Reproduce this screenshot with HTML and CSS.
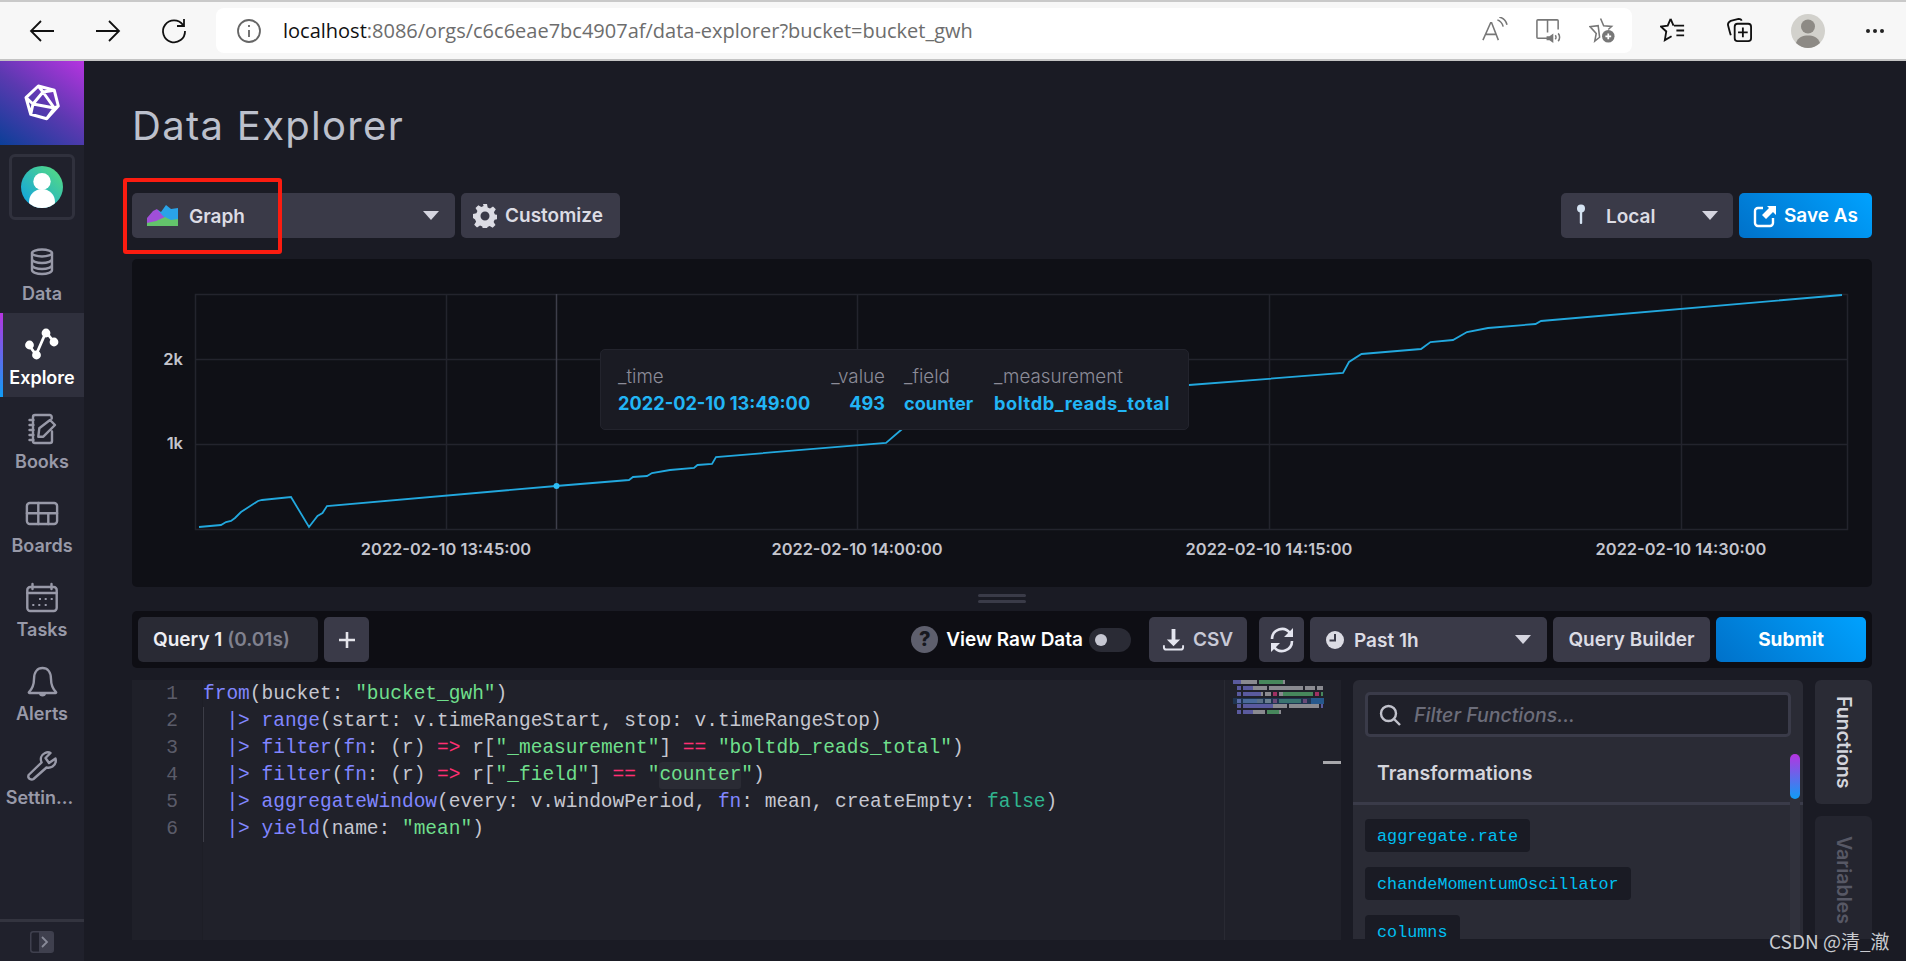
FILE: index.html
```html
<!DOCTYPE html>
<html lang="en">
<head>
<meta charset="utf-8">
<title>Data Explorer</title>
<link rel="stylesheet" href="styles.css">
</head>
<body>
<header class="browser">
  <svg class="bi bi-nav" viewBox="0 0 28 28"><path d="M26 14H3M13 4L3 14l10 10"/></svg>
  <svg class="bi bi-nav" viewBox="0 0 28 28"><path d="M2 14h23M15 4l10 10-10 10"/></svg>
  <svg class="bi bi-nav" viewBox="0 0 28 28"><path d="M23 8a11 11 0 1 0 2 6M24 2v7h-7"/></svg>
  <div class="urlbox">
    <svg class="bi bi-info" viewBox="0 0 26 26"><circle cx="13" cy="13" r="11"/><path d="M13 12v7M13 7v2"/></svg>
    <span class="url"><b>localhost</b>:8086/orgs/c6c6eae7bc4907af/data-explorer?bucket=bucket_gwh</span>
    <svg class="bi bi-tool grey" viewBox="0 0 28 28"><path d="M2 24L10 6h1l7 18M5 18h11M17 3c3 1 5 3 6 7M19 0c4 1 7 4 8 8" /></svg>
    <svg class="bi bi-tool grey" viewBox="0 0 28 28"><path d="M13 22H3a1 1 0 0 1-1-1V4a1 1 0 0 1 1-1h20a1 1 0 0 1 1 1v9M13 3v13"/><path class="fillg" d="M12 20h3l4-3v10l-4-3h-3z"/><path d="M21 19c1 1 1 3 0 4M24 17c2 2 2 6 0 8"/></svg>
    <svg class="bi bi-tool grey" viewBox="0 0 28 28"><path d="M12 1.500l3.200 7.500 8.300.8-3.500 3.200M11 21l-5 4 1.500-8L1 10l8.500-1z"/><circle class="fillg" cx="20" cy="20" r="6.500"/><path class="wht" d="M20 17v6M17 20h6"/></svg>
  </div>
  <svg class="bi bi-tool2" viewBox="0 0 28 28"><path d="M11 2l3 7M11 2L8 9l-7 1 5.500 5L5 24l7-4M14.500 9H25M17 14h8M17 19h8"/></svg>
  <svg class="bi bi-tool2 second" viewBox="0 0 28 28"><path d="M5 19c-1-3-2-7-3-11 0-2 1-3 3-4l8-2c2 0 3 1 3 2"/><rect x="9" y="7" width="17" height="18" rx="3"/><path d="M17.500 11v10M12.500 16h10"/></svg>
  <div class="profile"><svg viewBox="0 0 34 34"><circle cx="17" cy="17" r="17" fill="#d2d1cc"/><circle cx="17" cy="12.500" r="7" fill="#8d8a85"/><path d="M5 29c2-6 7-7.500 12-7.500S27 23 29 29c-3 3-8 5-12 5S8 32 5 29z" fill="#8d8a85"/></svg></div>
  <div class="more"><i></i><i></i><i></i></div>
</header>

<div class="app">
  <nav class="sidebar">
    <div class="logo">
      <svg viewBox="0 0 84 84" class="logo-svg"><path d="M38.300 25L54.300 29.300 58.300 45 46.700 57.700 30.700 53.300 26 36.700zM43 31L54.300 47 33 43zM38.300 25L43 31M54.300 29.300L43 31M26 36.700L33 43M33 43L30.700 53.300M54.300 47L46.700 57.700M54.300 47L58.300 45"/></svg>
    </div>
    <div class="avatar-box">
      <svg viewBox="0 0 42 42" class="avatar"><defs><linearGradient id="ag" x1="0" y1="1" x2="1" y2="0"><stop offset="0" stop-color="#0b9ee8"/><stop offset="1" stop-color="#5adf7c"/></linearGradient><clipPath id="ac"><circle cx="21" cy="21" r="21"/></clipPath></defs><circle cx="21" cy="21" r="21" fill="url(#ag)"/><g clip-path="url(#ac)" fill="#fff"><ellipse cx="21" cy="15.500" rx="8.700" ry="8.500"/><ellipse cx="21" cy="36" rx="13" ry="13"/></g></svg>
    </div>
    <a class="nav-item">
      <svg class="nav-icon" viewBox="0 0 32 30"><ellipse cx="16" cy="7" rx="10" ry="3.500"/><path d="M6 7v17c0 2.200 4.500 4 10 4s10-1.800 10-4V7M6 13c0 2.200 4.500 4 10 4s10-1.800 10-4M6 19c0 2.200 4.500 4 10 4s10-1.800 10-4"/></svg>
      <span>Data</span>
    </a>
    <a class="nav-item active">
      <svg class="nav-icon" viewBox="0 0 32 30"><path d="M3 15l7 10L20 2l8 10"/><g class="dots"><circle cx="3.500" cy="15" r="3"/><circle cx="10.500" cy="25" r="3"/><circle cx="20" cy="3" r="3"/><circle cx="28" cy="12" r="3"/></g></svg>
      <span>Explore</span>
    </a>
    <a class="nav-item">
      <svg class="nav-icon" viewBox="0 0 32 30"><path d="M25.700 4.500V3a2 2 0 0 0-2-2H9a2 2 0 0 0-2 2v24a2 2 0 0 0 2 2h15a2 2 0 0 0 2-2V17.500M3.500 6h4M3.500 11h4M3.500 16h4M3.500 21h4M3.500 26h4M12.300 22.700l1-8.400L24 6l5 5-11.700 11.700z"/></svg>
      <span>Books</span>
    </a>
    <a class="nav-item">
      <svg class="nav-icon" viewBox="0 0 32 30"><rect x=".9" y="5" width="30.200" height="21" rx="3"/><path d="M.9 15.300h30.200M12.300 5v21M22.300 15.300V26"/></svg>
      <span>Boards</span>
    </a>
    <a class="nav-item">
      <svg class="nav-icon" viewBox="0 0 32 30"><rect x="1.300" y="5" width="29.400" height="24" rx="3"/><path d="M1.300 11h29.400M6.500 2v5M25.500 2v5"/><path class="dash" d="M13 17h2M18.700 17h2M24.700 17h2M6.300 23h2M12.300 23h2M18.700 23h2"/></svg>
      <span>Tasks</span>
    </a>
    <a class="nav-item">
      <svg class="nav-icon" viewBox="0 0 32 30"><path d="M3 26c3.500-3.500 5-7 5-13C8 6 11.500 2 16.500 2S25 6 25 13c0 6 1.500 9.500 5 13 .5.500 0 1-.5 1H3.500c-.5 0-1-.5-.5-1z"/><path class="solid" d="M13 27.500h7c0 2-1.500 3-3.500 3s-3.500-1-3.500-3z"/></svg>
      <span>Alerts</span>
    </a>
    <a class="nav-item">
      <svg class="nav-icon" viewBox="0 0 32 30"><path d="M2.600 25l13-12.500C14 9 15 5 19 3c2-1 4-1 5.500 0L19.500 8l3.500 5 6.500-4.500c.8 3-.2 6-3 8-2 1.300-4 1.600-6 1L7.500 29c-1.500 1-4 .5-5-1.300-.5-1 0-2 .1-2.700z"/></svg>
      <span class="clip">Settin...</span>
    </a>
    <div class="side-foot">
      <svg viewBox="0 0 24 22" class="foot-icon"><rect x=".75" y=".75" width="22.500" height="20.500" rx="2.500" class="foot-box"/><path d="M9 1h12a2 2 0 0 1 2 2v16a2 2 0 0 1-2 2H9z" class="foot-fill"/><path d="M12 6l5 5-5 5" class="foot-chev"/></svg>
    </div>
  </nav>

  <main class="main">
    <div class="page-head"><h1>Data Explorer</h1></div>

    <div class="toolbar">
      <div class="red-mark"></div>
      <button class="btn graph-select">
        <svg class="graph-icon" viewBox="0 0 31 21"><path d="M0 14L11 5l3 2 5-7 5 4 7-1v15H0z" fill="#2aa3e8"/><path d="M0 21v-8L6 6l4-2 6 7 6 4 9 0v6z" fill="#a04fd8"/><path d="M0 21v-3l9-2 9-4 6 3 7-1v7z" fill="#63c46b"/></svg>
        <span class="grow">Graph</span>
        <i class="caret"></i>
      </button>
      <button class="btn customize">
        <svg class="gear" viewBox="0 0 24 24"><path d="M10 0h4l.7 3.400 2.300 1 3-1.900 2.800 2.800-1.900 3 1 2.300 3.100.400v4l-3.400.7-1 2.300 1.900 3-2.800 2.800-3-1.900-2.300 1-.4 3.100h-4l-.7-3.400-2.300-1-3 1.900-2.800-2.800 1.900-3-1-2.300L0 14v-4l3.400-.7 1-2.300-1.900-3L5.300 1.200l3 1.900 2.300-1zM12 7.500a4.500 4.500 0 1 0 0 9 4.500 4.500 0 0 0 0-9z" fill-rule="evenodd"/></svg>
        <span>Customize</span>
      </button>
      <div class="spacer"></div>
      <button class="btn local">
        <svg class="pin" viewBox="0 0 10 20"><circle cx="5" cy="4.500" r="4"/><rect x="3.800" y="7" width="2.400" height="13" rx="1"/></svg>
        <span class="grow">Local</span>
        <i class="caret"></i>
      </button>
      <button class="btn primary save">
        <svg class="save-icon" viewBox="0 0 24 24"><path d="M10 4H5a3 3 0 0 0-3 3v12a3 3 0 0 0 3 3h12a3 3 0 0 0 3-3v-5"/><path class="solid" d="M14 2h9v9l-3-3-7 7-4-4 7-7z"/></svg>
        <span>Save As</span>
      </button>
    </div>

    <section class="chart">
      <svg class="plot" viewBox="0 0 1740 328">
        <g class="grid">
          <path d="M63.500 35.500h1652v235H63.500z"/>
          <path d="M63 100.500h1652M63 185.500h1652M314.500 35v235M725.500 35v235M1137.500 35v235M1549.500 35v235"/>
        </g>
        <path class="cross" d="M424.500 35v235"/>
        <polyline class="series" points="67,268 89,266 94,263 99,262 103,259 109,253 126,242 130,241 159,238 177,268 185.500,257 190.500,254 195,247 424,227 497,221 501,218 515,217 520,214 538,211 562,209 565.500,206 580,205 584,198 754,184 769,171 800,145 1057,126 1211,114 1217,103 1229.500,95 1289,90 1298.500,83 1321,81 1335,73 1356,69 1403.500,65 1409,62 1710,36"/>
        <circle class="dot" cx="424.500" cy="227" r="3"/>
        <g class="ylab"><text x="51" y="106">2k</text><text x="51" y="190">1k</text></g>
        <g class="xlab"><text x="314" y="296">2022-02-10 13:45:00</text><text x="725" y="296">2022-02-10 14:00:00</text><text x="1137" y="296">2022-02-10 14:15:00</text><text x="1549" y="296">2022-02-10 14:30:00</text></g>
      </svg>
      <div class="tip">
        <span>_time</span><span class="r">_value</span><span>_field</span><span>_measurement</span>
        <b>2022-02-10 13:49:00</b><b class="r">493</b><b>counter</b><b>boltdb_reads_total</b>
      </div>
    </section>

    <div class="handle"><i></i><i></i></div>

    <div class="querybar">
      <div class="qtab">Query 1 <em>(0.01s)</em></div>
      <button class="btn plus"><svg viewBox="0 0 16 16"><path d="M8 0v16M0 8h16"/></svg></button>
      <div class="spacer"></div>
      <div class="help">?</div>
      <span class="raw">View Raw Data</span>
      <div class="toggle"><i></i></div>
      <button class="btn csv">
        <svg class="csv-icon" viewBox="0 0 24 24"><path class="solid" d="M10 1h4v11h5l-7 7-7-7h5z"/><path d="M2 18v2a2.500 2.500 0 0 0 2.500 2.500h15A2.500 2.500 0 0 0 22 20v-2"/></svg>
        <span>CSV</span>
      </button>
      <button class="btn refresh">
        <svg viewBox="0 0 26 26"><path d="M3 12a10 10 0 0 1 18-6M23 14a10 10 0 0 1-18 6"/><path class="solid" d="M24 1v9h-9zM2 25v-9h9z"/></svg>
      </button>
      <button class="btn past">
        <svg class="clock" viewBox="0 0 18 18"><circle cx="9" cy="9" r="9"/><path d="M9 3v6.500H3.500"/></svg>
        <span class="grow">Past 1h</span>
        <i class="caret"></i>
      </button>
      <button class="btn builder">Query Builder</button>
      <button class="btn primary submit">Submit</button>
    </div>

    <div class="workspace">
      <div class="editor">
        <div class="gutter"><div>1</div><div>2</div><div>3</div><div>4</div><div>5</div><div>6</div></div>
        <div class="code">
          <i class="guide"></i>
          <div class="ln"><span class="f">from</span>(bucket: <span class="s">"bucket_gwh"</span>)</div>
          <div class="ln">  <span class="f">|&gt;</span> <span class="f">range</span>(start: v.timeRangeStart, stop: v.timeRangeStop)</div>
          <div class="ln">  <span class="f">|&gt;</span> <span class="f">filter</span>(<span class="f">fn</span>: (r) <span class="o">=&gt;</span> r[<span class="s">"_measurement"</span>] <span class="o">==</span> <span class="s">"boltdb_reads_total"</span>)</div>
          <div class="ln">  <span class="f">|&gt;</span> <span class="f">filter</span>(<span class="f">fn</span>: (r) <span class="o">=&gt;</span> r[<span class="s">"_field"</span>] <span class="o">==</span> <span class="s">"<span class="hl">counter</span>"</span>)</div>
          <div class="ln">  <span class="f">|&gt;</span> <span class="f">aggregateWindow</span>(every: v.windowPeriod, <span class="f">fn</span>: mean, createEmpty: <span class="b">false</span>)</div>
          <div class="ln">  <span class="f">|&gt;</span> <span class="f">yield</span>(name: <span class="s">"mean"</span>)</div>
        </div>
        <div class="minimap">
          <svg class="mini" viewBox="0 0 117 40">
            <g class="mp"><rect x="8" y="0" width="8" height="4"/><rect x="12" y="6" width="4" height="4"/><rect x="18" y="6" width="10" height="4"/><rect x="12" y="12" width="4" height="4"/><rect x="18" y="12" width="18" height="4"/><rect x="12" y="24" width="4" height="4"/><rect x="18" y="24" width="30" height="4"/><rect x="96" y="24" width="2" height="4"/><rect x="12" y="30" width="4" height="4"/><rect x="18" y="30" width="10" height="4"/></g>
            <g class="mg"><rect x="16" y="0" width="16" height="4"/><rect x="58" y="0" width="2" height="4"/><rect x="28" y="6" width="14" height="4"/><rect x="44" y="6" width="34" height="4"/><rect x="80" y="6" width="10" height="4"/><rect x="92" y="6" width="6" height="4"/><rect x="36" y="12" width="2" height="4"/><rect x="40" y="12" width="6" height="4"/><rect x="54" y="12" width="4" height="4"/><rect x="48" y="24" width="14" height="4"/><rect x="64" y="24" width="30" height="4"/><rect x="28" y="30" width="12" height="4"/><rect x="54" y="30" width="2" height="4"/></g>
            <g class="ms"><rect x="34" y="0" width="24" height="4"/><rect x="58" y="12" width="30" height="4"/><rect x="96" y="12" width="2" height="4"/><rect x="42" y="30" width="12" height="4"/></g>
            <g class="mk"><rect x="48" y="12" width="4" height="4"/><rect x="90" y="12" width="4" height="4"/></g>
            <rect class="mh" x="8" y="18" width="91" height="6"/>
            <g class="mr"><rect x="12" y="19" width="4" height="4" fill="#5a6aa8"/><rect x="18" y="19" width="14" height="4" fill="#4a6a9a"/><rect x="32" y="19" width="6" height="4" fill="#5a7088"/><rect x="40" y="19" width="6" height="4" fill="#6a7f8f"/><rect x="48" y="19" width="4" height="4" fill="#6a4a78"/><rect x="54" y="19" width="22" height="4" fill="#3a7470"/><rect x="78" y="19" width="4" height="4" fill="#6a4a78"/><rect x="86" y="18" width="13" height="6" fill="#26588c"/></g>
          </svg>
          <i class="ruler"></i>
        </div>
      </div>

      <aside class="functions">
        <div class="filter">
          <svg class="search" viewBox="0 0 22 22"><circle cx="9.500" cy="9.500" r="7.500"/><path d="M15 15l6 6"/></svg>
          <span>Filter Functions...</span>
        </div>
        <h3>Transformations</h3>
        <div class="tags">
          <div class="tag">aggregate.rate</div>
          <div class="tag">chandeMomentumOscillator</div>
          <div class="tag">columns</div>
        </div>
        <i class="scroll-track"></i>
        <i class="scroll-thumb"></i>
      </aside>

      <div class="sidetabs">
        <div class="stab on">Functions</div>
        <div class="stab">Variables</div>
      </div>
    </div>
  </main>
</div>
<div class="watermark">CSDN @清_澈</div>
</body>
</html>
```

FILE: styles.css
```css
* { box-sizing: border-box; }
html, body { margin: 0; height: 100%; }
body {
  width: 1906px;
  height: 961px;
  overflow: hidden;
  background: #1a1b24;
  font-family: Inter, "Noto Sans", sans-serif;
  position: relative;
}
button { font: inherit; border: 0; }

/* browser chrome */
.browser {
  height: 61px;
  background: #f7f7f7;
  border-top: 2px solid #c9c9c9;
  border-bottom: 2px solid #c4c4c4;
  display: flex;
  align-items: center;
  padding-left: 28px;
}
.bi { fill: none; stroke: #111; stroke-width: 1.8; flex: none; }
.bi-nav { width: 28px; height: 28px; margin-right: 38px; }
.bi-nav:nth-child(3) { margin-right: 0; }
.urlbox {
  margin-left: 28px;
  width: 1416px;
  height: 45px;
  background: #fff;
  border-radius: 8px;
  display: flex;
  align-items: center;
  position: relative;
}
.bi-info { position: absolute; left: 20px; width: 26px; height: 26px; stroke: #666; }
.url {
  margin-left: 67px;
  font: 400 20px "Open Sans", sans-serif;
  color: #6d6d6d;
  flex: 1;
  white-space: nowrap;
}
.url b { font-weight: 400; color: #111; }
.bi-tool { width: 27px; height: 27px; margin-right: 27px; }
.bi-tool:last-child { margin-right: 16px; }
.grey { stroke: #777; stroke-width: 1.600; }
.fillg { fill: #777; stroke: none; }
.wht { stroke: #fff; stroke-width: 1.800; }
.bi-tool2 { width: 27px; height: 27px; margin-left: 28px; stroke-width: 1.900; }
.bi-tool2.second { margin-left: 39px; }
.profile { width: 34px; height: 34px; margin-left: 38px; }
.profile svg { display: block; }
.more { margin-left: 41px; display: flex; gap: 3px; }
.more i { width: 4px; height: 4px; border-radius: 50%; background: #222; }

/* layout */
.app { display: flex; height: 900px; }
.sidebar {
  width: 84px;
  flex: none;
  background: #20212c;
  display: flex;
  flex-direction: column;
  position: relative;
}
.logo {
  height: 84px;
  background: linear-gradient(35deg, #0b3f98 0%, #5b39b0 50%, #b634e0 100%);
}
.logo-svg { display: block; width: 84px; height: 84px; fill: none; stroke: #fff; stroke-width: 3; stroke-linejoin: round; }
.avatar-box {
  margin: 9px 0 9px 9px;
  width: 66px;
  height: 66px;
  border: 3px solid #30313d;
  border-radius: 6px;
  display: flex;
  align-items: center;
  justify-content: center;
}
.avatar { width: 42px; height: 42px; }
.nav-item {
  height: 84px;
  display: flex;
  flex-direction: column;
  align-items: center;
  padding-top: 17px;
  color: #9899a8;
  font-size: 18px;
  font-weight: 600;
  line-height: 22px;
  position: relative;
}
.nav-item span { margin-top: 7px; }
.nav-item .clip { margin-right: 5px; }
.nav-icon { width: 32px; height: 30px; flex: none; overflow: visible; fill: none; stroke: #9899a8; stroke-width: 2.400; stroke-linejoin: round; stroke-linecap: round; }
.nav-icon .solid { fill: #9899a8; stroke: none; }
.nav-icon .dash { stroke-linecap: butt; stroke-width: 2; }
.nav-item.active { background: #2f303d; color: #fff; }
.nav-item.active .nav-icon { stroke: #fff; stroke-width: 2.800; }
.dots { fill: #fff; }
.nav-item.active::before {
  content: "";
  position: absolute;
  inset: 0 auto 0 0;
  width: 3px;
  background: linear-gradient(#b634e0, #0f9cf5);
}
.side-foot {
  margin-top: auto;
  height: 42px;
  border-top: 3px solid #33343f;
  display: flex;
  justify-content: center;
  align-items: center;
}
.foot-icon { width: 24px; height: 22px; }
.foot-box { fill: none; stroke: #3f404e; stroke-width: 1.500; }
.foot-fill { fill: #3f404e; }
.foot-chev { fill: none; stroke: #888a98; stroke-width: 1.800; }

.main { flex: 1; min-width: 0; padding: 0 34px 0 48px; display: flex; flex-direction: column; }
.page-head { height: 132px; padding-top: 41px; }
h1 { margin: 0; font-size: 40px; line-height: 48px; font-weight: 400; letter-spacing: 1.300px; color: #bcc0cc; }

/* buttons */
.toolbar { display: flex; gap: 6px; height: 45px; position: relative; margin-bottom: 21px; }
.spacer { flex: 1; }
.grow { flex: 1; text-align: left; padding-top: 2px; }
.btn {
  height: 45px;
  background: #3a3a48;
  color: #dcdce4;
  border-radius: 5px;
  display: flex;
  align-items: center;
  font-size: 19px;
  font-weight: 600;
  padding: 0;
}
.caret { width: 0; height: 0; border: 8px solid transparent; border-top: 9px solid #d5d5e0; border-bottom: 0; flex: none; }
.primary { background: linear-gradient(45deg, #0071c9, #00a2ff); color: #fff; }
.red-mark {
  position: absolute;
  left: -9px;
  top: -15px;
  width: 159px;
  height: 76px;
  border: 4px solid #fb1c10;
  border-radius: 3px;
  z-index: 2;
}
.graph-select { width: 323px; padding: 0 16px 0 15px; }
.graph-icon { width: 31px; height: 21px; margin-right: 11px; }
.customize { width: 159px; padding-left: 12px; }
.gear { width: 24px; height: 24px; fill: #dcdce4; margin-right: 8px; }
.local { width: 172px; padding: 0 15px 0 15px; }
.pin { width: 10px; height: 20px; fill: #d5e3f2; margin-right: 20px; margin-top: -4px; }
.save { width: 133px; padding-left: 14px; }
.save-icon { width: 24px; height: 24px; fill: none; stroke: #fff; stroke-width: 2.400; margin-right: 7px; }
.solid { fill: currentColor; stroke: none; }

/* chart */
.chart { height: 328px; background: #0f1016; border-radius: 5px; position: relative; }
.plot { display: block; width: 1740px; height: 328px; }
.grid path { fill: none; stroke: #23242d; stroke-width: 1.500; }
.cross { stroke: #3d3e4a; stroke-width: 1.500; }
.series { fill: none; stroke: #22a8de; stroke-width: 1.800; }
.dot { fill: #2ebdf5; }
.ylab text { text-anchor: end; fill: #c4c5ce; font-size: 16.500px; font-weight: 600; }
.xlab text { text-anchor: middle; fill: #c4c5ce; font-size: 16.400px; font-weight: 600; }
.tip {
  position: absolute;
  left: 468px;
  top: 90px;
  width: 589px;
  height: 81px;
  padding: 16px 0 0 17px;
  background: #1a1b23;
  border: 1px solid #23242d;
  border-radius: 5px;
  display: grid;
  grid-template-columns: 191px 57px 71px 178px;
  column-gap: 19px;
  row-gap: 4px;
  align-content: start;
  font-size: 18.800px;
  font-weight: 300;
  line-height: 22px;
  color: #8c8c98;
  white-space: nowrap;
}
.tip b { color: #22b5f5; font-weight: 700; font-size: 18.200px; }
.tip b:last-child { letter-spacing: .6px; }
.tip .r { text-align: right; }

.handle { height: 24px; display: flex; flex-direction: column; align-items: center; gap: 3px; padding-top: 7px; }
.handle i { width: 48px; height: 3px; background: #3a3b48; border-radius: 2px; }

/* query bar */
.querybar { height: 57px; background: #0e0e14; border-radius: 5px; padding: 6px; display: flex; align-items: center; }
.qtab {
  width: 180px;
  height: 45px;
  background: #292a34;
  border-radius: 5px;
  color: #eeeef3;
  font-size: 19px;
  font-weight: 600;
  line-height: 46px;
  padding-left: 15px;
  margin-right: 6px;
  white-space: nowrap;
}
.qtab em { font-style: normal; color: #80818e; }
.plus { width: 45px; justify-content: center; }
.plus svg { width: 16px; height: 16px; fill: none; stroke: #e4e4ea; stroke-width: 2.600; }
.help {
  width: 27px;
  height: 27px;
  border-radius: 50%;
  background: #5e5f6d;
  color: #17181f;
  font-size: 20px;
  font-weight: 800;
  line-height: 27px;
  text-align: center;
  margin-right: 8px;
}
.raw { color: #fff; font-size: 19px; font-weight: 600; margin-right: 6px; white-space: nowrap; }
.toggle { width: 42px; height: 24px; border-radius: 12px; background: #2a2b35; margin-right: 18px; display: flex; align-items: center; padding-left: 6px; }
.toggle i { width: 12px; height: 12px; border-radius: 50%; background: #c6c7d2; }
.csv { width: 98px; padding-left: 13px; color: #c8c9d6; }
.csv-icon { width: 23px; height: 23px; color: #e4e5ef; fill: none; stroke: #e4e5ef; stroke-width: 2; margin-right: 8px; }
.refresh { width: 45px; justify-content: center; margin-left: 12px; color: #e4e5ef; }
.refresh svg { width: 26px; height: 26px; fill: none; stroke: #e4e5ef; stroke-width: 2.600; }
.past { width: 237px; margin-left: 6px; padding: 0 16px 0 16px; }
.clock { width: 18px; height: 18px; margin-right: 10px; fill: #dcdce4; stroke: none; }
.clock path { fill: none; stroke: #3a3a48; stroke-width: 2; }
.builder { width: 157px; margin-left: 6px; justify-content: center; }
.submit { width: 150px; margin-left: 6px; justify-content: center; font-weight: 700; }

/* workspace */
.workspace { margin-top: 12px; height: 260px; display: flex; gap: 12px; }
.editor { width: 1209px; flex: none; background: #20212a; display: flex; overflow: hidden; }
.gutter {
  width: 71px;
  flex: none;
  padding: 1px 24px 0 0;
  text-align: right;
  font: 19.500px/27px "Liberation Mono", monospace;
  color: #5b5c69;
  background: #1f2029;
  border-right: 1px solid #1d1e26;
}
.code {
  flex: 1;
  position: relative;
  padding-top: 1px;
  font: 19.500px/27px "Liberation Mono", monospace;
  color: #c6c7d0;
}
.ln { height: 27px; white-space: pre; }
.guide { position: absolute; left: 0; top: 27px; height: 135px; width: 1px; background: #3c3d47; }
.f { color: #8186ff; }
.s { color: #6fdf8c; }
.o { color: #ff2f72; }
.b { color: #30b48f; }
.hl { background: #2a2b34; display: inline-block; height: 27px; border-radius: 3px; }
.minimap { width: 117px; flex: none; border-left: 1px solid #292a33; position: relative; }
.mini { display: block; width: 117px; height: 40px; }
.mp { fill: #5a5a9e; }
.mg { fill: #8a8a90; }
.ms { fill: #47875c; }
.mk { fill: #a03062; }
.mh { fill: #1f3450; }
.ruler { position: absolute; right: 0; top: 81px; width: 18px; height: 3px; background: #a8a8ac; }

/* functions */
.functions { width: 450px; flex: none; background: #2a2b35; border-radius: 6px 6px 0 0; height: 259px; position: relative; overflow: hidden; padding-top: 12px; }
.filter {
  margin-left: 12px;
  width: 426px;
  height: 45px;
  background: #1f2029;
  border: 3px solid #3a3b49;
  border-radius: 5px;
  display: flex;
  align-items: center;
  padding-left: 11px;
  font-size: 19.500px;
  font-style: italic;
  font-weight: 500;
  color: #6c6d7a;
  white-space: nowrap;
}
.search { width: 22px; height: 22px; fill: none; stroke: #c0c1cb; stroke-width: 2.400; margin-right: 13px; flex: none; }
h3 {
  margin: 0;
  height: 68px;
  line-height: 72px;
  padding-left: 24px;
  border-bottom: 3px solid #3a3b49;
  color: #d4d5dc;
  font-size: 19.500px;
  font-weight: 600;
}
.tags { padding: 14px 0 0 12px; display: flex; flex-direction: column; align-items: flex-start; gap: 15px; }
.tag {
  height: 33px;
  padding: 0 12px;
  background: #1a1b24;
  border-radius: 4px;
  color: #00bff0;
  font: 16.800px/35px "Liberation Mono", monospace;
}
.scroll-track { position: absolute; left: 437px; top: 74px; bottom: 0; width: 10px; background: #30313c; }
.scroll-thumb { position: absolute; left: 437px; top: 74px; height: 45px; width: 10px; border-radius: 5px; background: linear-gradient(#b634e0, #0f9cf5); }

.sidetabs { width: 57px; flex: none; display: flex; flex-direction: column; gap: 12px; height: 259px; overflow: hidden; }
.stab {
  flex: none;
  writing-mode: vertical-rl;
  background: #24252f;
  border-radius: 6px;
  color: #575865;
  font-size: 19.500px;
  font-weight: 600;
  width: 57px;
  height: 143px;
  line-height: 57px;
  padding-top: 20px;
}
.stab.on { height: 124px; background: #2a2b35; color: #d4d5dc; padding-top: 16px; }

.watermark {
  position: absolute;
  left: 1769px;
  top: 927px;
  color: #c9cbd0;
  font: 19px/28px "Noto Sans CJK SC", "Noto Sans", sans-serif;
  white-space: nowrap;
}
```
